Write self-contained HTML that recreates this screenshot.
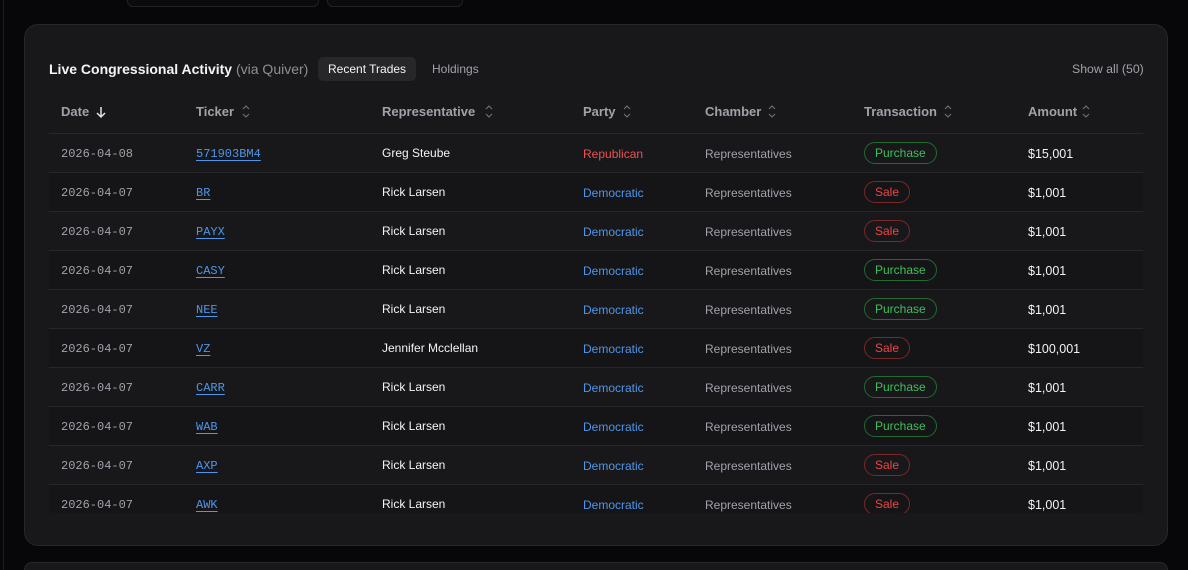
<!DOCTYPE html>
<html style="width:1188px;height:570px;overflow:hidden"><head><meta charset="utf-8"><style>
*{margin:0;padding:0;box-sizing:border-box}
body{width:1188px;height:570px;background:#070709;position:relative;overflow:hidden;font-family:"Liberation Sans",sans-serif;color:#e4e4e7}
.lb{position:absolute;left:3px;top:0;width:1px;height:570px;background:#1c1c1f}
.tb{position:absolute;top:-10px;height:17px;border:1px solid #222225;border-radius:6px;background:#0b0b0e}
.card{position:absolute;left:24px;top:24px;width:1144px;height:522px;background:#18181b;border:1px solid #27272a;border-radius:14px}
.card2{position:absolute;left:24px;top:562px;width:1144px;height:8px;background:#18181b;border:1px solid #27272a;border-bottom:none;border-radius:14px 14px 0 0}
.t{position:absolute;white-space:nowrap;font-size:12px;line-height:14px}
.title{left:49px;top:61px;font-size:14px;line-height:16px;font-weight:bold;color:#f4f4f5}
.title span{font-weight:normal;color:#8e8e95}
.tab{position:absolute;top:57px;height:24px;border-radius:5px;font-size:12px;line-height:24px;padding:0 10px}
.hd{color:#a1a1aa;font-weight:bold;top:104px;font-size:13px;line-height:15px}
.row{position:absolute;left:49px;width:1094px;height:39px;border-top:1px solid #27272a}
.row.alt{background:#151518}
.mono{font-family:"Liberation Mono",monospace;font-size:12px}
.date{color:#a1a1aa}
.tk{color:#4f95e8;text-decoration:underline;text-underline-offset:3px}
.rep{color:#f4f4f5}
.dem{color:#4f95e8}.repub{color:#ef5050}
.ch{color:#a1a1aa}
.pill{position:absolute;height:22px;border-radius:11px;font-size:12px;line-height:20px;padding:0 10px;border:1px solid}
.pu{color:#3fbf5a;border-color:#1f6b30}
.sa{color:#ef4444;border-color:#7a2828}
.amt{color:#f4f4f5;font-size:12.5px}
.clip{position:absolute;left:0;top:0;width:1188px;height:513px;overflow:hidden}
svg{position:absolute}
</style></head><body>
<div class="lb"></div>
<div class="tb" style="left:127px;width:192px"></div>
<div class="tb" style="left:327px;width:136px"></div>
<div class="card"></div>
<div class="card2"></div>
<div class="t title">Live Congressional Activity <span>(via Quiver)</span></div>
<div class="tab" style="left:318px;background:#27272a;color:#f4f4f5">Recent Trades</div>
<div class="tab" style="left:422px;color:#a1a1aa">Holdings</div>
<div class="t" style="left:1072px;top:62px;color:#a1a1aa;font-size:12.3px">Show all (50)</div>

<div class="t hd" style="left:61px">Date</div>
<svg style="left:95px;top:105px" width="12" height="14" viewBox="0 0 12 14"><path d="M6 2v10M2 8l4 4 4-4" stroke="#e4e4e7" stroke-width="1.5" fill="none"/></svg>
<div class="t hd" style="left:196px">Ticker</div>
<div class="t hd" style="left:382px">Representative</div>
<div class="t hd" style="left:583px">Party</div>
<div class="t hd" style="left:705px">Chamber</div>
<div class="t hd" style="left:864px">Transaction</div>
<div class="t hd" style="left:1028px">Amount</div>
<svg width="1188" height="130" style="left:0;top:0">
<g stroke="#71717a" stroke-width="1.1" fill="none">
<path d="M243 109l3-3 3 3M243 114l3 3 3-3"/>
<path d="M486 109l3-3 3 3M486 114l3 3 3-3"/>
<path d="M624 109l3-3 3 3M624 114l3 3 3-3"/>
<path d="M769 109l3-3 3 3M769 114l3 3 3-3"/>
<path d="M945 109l3-3 3 3M945 114l3 3 3-3"/>
<path d="M1083 109l3-3 3 3M1083 114l3 3 3-3"/>
</g></svg>

<div class="clip">
<div class="row" style="top:133px"></div>
<div class="row alt" style="top:172px"></div>
<div class="row" style="top:211px"></div>
<div class="row alt" style="top:250px"></div>
<div class="row" style="top:289px"></div>
<div class="row alt" style="top:328px"></div>
<div class="row" style="top:367px"></div>
<div class="row alt" style="top:406px"></div>
<div class="row" style="top:445px"></div>
<div class="row alt" style="top:484px"></div>

<div class="t mono date" style="left:61px;top:147px">2026-04-08</div><div class="t mono tk" style="left:196px;top:147px">571903BM4</div><div class="t rep" style="left:382px;top:146px">Greg Steube</div><div class="t repub" style="left:583px;top:147px">Republican</div><div class="t ch" style="left:705px;top:147px">Representatives</div><div class="pill pu" style="left:864px;top:142px">Purchase</div><div class="t amt" style="left:1028px;top:147px">$15,001</div>

<div class="t mono date" style="left:61px;top:186px">2026-04-07</div><div class="t mono tk" style="left:196px;top:186px">BR</div><div class="t rep" style="left:382px;top:185px">Rick Larsen</div><div class="t dem" style="left:583px;top:186px">Democratic</div><div class="t ch" style="left:705px;top:186px">Representatives</div><div class="pill sa" style="left:864px;top:181px">Sale</div><div class="t amt" style="left:1028px;top:186px">$1,001</div>

<div class="t mono date" style="left:61px;top:225px">2026-04-07</div><div class="t mono tk" style="left:196px;top:225px">PAYX</div><div class="t rep" style="left:382px;top:224px">Rick Larsen</div><div class="t dem" style="left:583px;top:225px">Democratic</div><div class="t ch" style="left:705px;top:225px">Representatives</div><div class="pill sa" style="left:864px;top:220px">Sale</div><div class="t amt" style="left:1028px;top:225px">$1,001</div>

<div class="t mono date" style="left:61px;top:264px">2026-04-07</div><div class="t mono tk" style="left:196px;top:264px">CASY</div><div class="t rep" style="left:382px;top:263px">Rick Larsen</div><div class="t dem" style="left:583px;top:264px">Democratic</div><div class="t ch" style="left:705px;top:264px">Representatives</div><div class="pill pu" style="left:864px;top:259px">Purchase</div><div class="t amt" style="left:1028px;top:264px">$1,001</div>

<div class="t mono date" style="left:61px;top:303px">2026-04-07</div><div class="t mono tk" style="left:196px;top:303px">NEE</div><div class="t rep" style="left:382px;top:302px">Rick Larsen</div><div class="t dem" style="left:583px;top:303px">Democratic</div><div class="t ch" style="left:705px;top:303px">Representatives</div><div class="pill pu" style="left:864px;top:298px">Purchase</div><div class="t amt" style="left:1028px;top:303px">$1,001</div>

<div class="t mono date" style="left:61px;top:342px">2026-04-07</div><div class="t mono tk" style="left:196px;top:342px">VZ</div><div class="t rep" style="left:382px;top:341px">Jennifer Mcclellan</div><div class="t dem" style="left:583px;top:342px">Democratic</div><div class="t ch" style="left:705px;top:342px">Representatives</div><div class="pill sa" style="left:864px;top:337px">Sale</div><div class="t amt" style="left:1028px;top:342px">$100,001</div>

<div class="t mono date" style="left:61px;top:381px">2026-04-07</div><div class="t mono tk" style="left:196px;top:381px">CARR</div><div class="t rep" style="left:382px;top:380px">Rick Larsen</div><div class="t dem" style="left:583px;top:381px">Democratic</div><div class="t ch" style="left:705px;top:381px">Representatives</div><div class="pill pu" style="left:864px;top:376px">Purchase</div><div class="t amt" style="left:1028px;top:381px">$1,001</div>

<div class="t mono date" style="left:61px;top:420px">2026-04-07</div><div class="t mono tk" style="left:196px;top:420px">WAB</div><div class="t rep" style="left:382px;top:419px">Rick Larsen</div><div class="t dem" style="left:583px;top:420px">Democratic</div><div class="t ch" style="left:705px;top:420px">Representatives</div><div class="pill pu" style="left:864px;top:415px">Purchase</div><div class="t amt" style="left:1028px;top:420px">$1,001</div>

<div class="t mono date" style="left:61px;top:459px">2026-04-07</div><div class="t mono tk" style="left:196px;top:459px">AXP</div><div class="t rep" style="left:382px;top:458px">Rick Larsen</div><div class="t dem" style="left:583px;top:459px">Democratic</div><div class="t ch" style="left:705px;top:459px">Representatives</div><div class="pill sa" style="left:864px;top:454px">Sale</div><div class="t amt" style="left:1028px;top:459px">$1,001</div>

<div class="t mono date" style="left:61px;top:498px">2026-04-07</div><div class="t mono tk" style="left:196px;top:498px">AWK</div><div class="t rep" style="left:382px;top:497px">Rick Larsen</div><div class="t dem" style="left:583px;top:498px">Democratic</div><div class="t ch" style="left:705px;top:498px">Representatives</div><div class="pill sa" style="left:864px;top:493px">Sale</div><div class="t amt" style="left:1028px;top:498px">$1,001</div>
</div>
</body></html>
